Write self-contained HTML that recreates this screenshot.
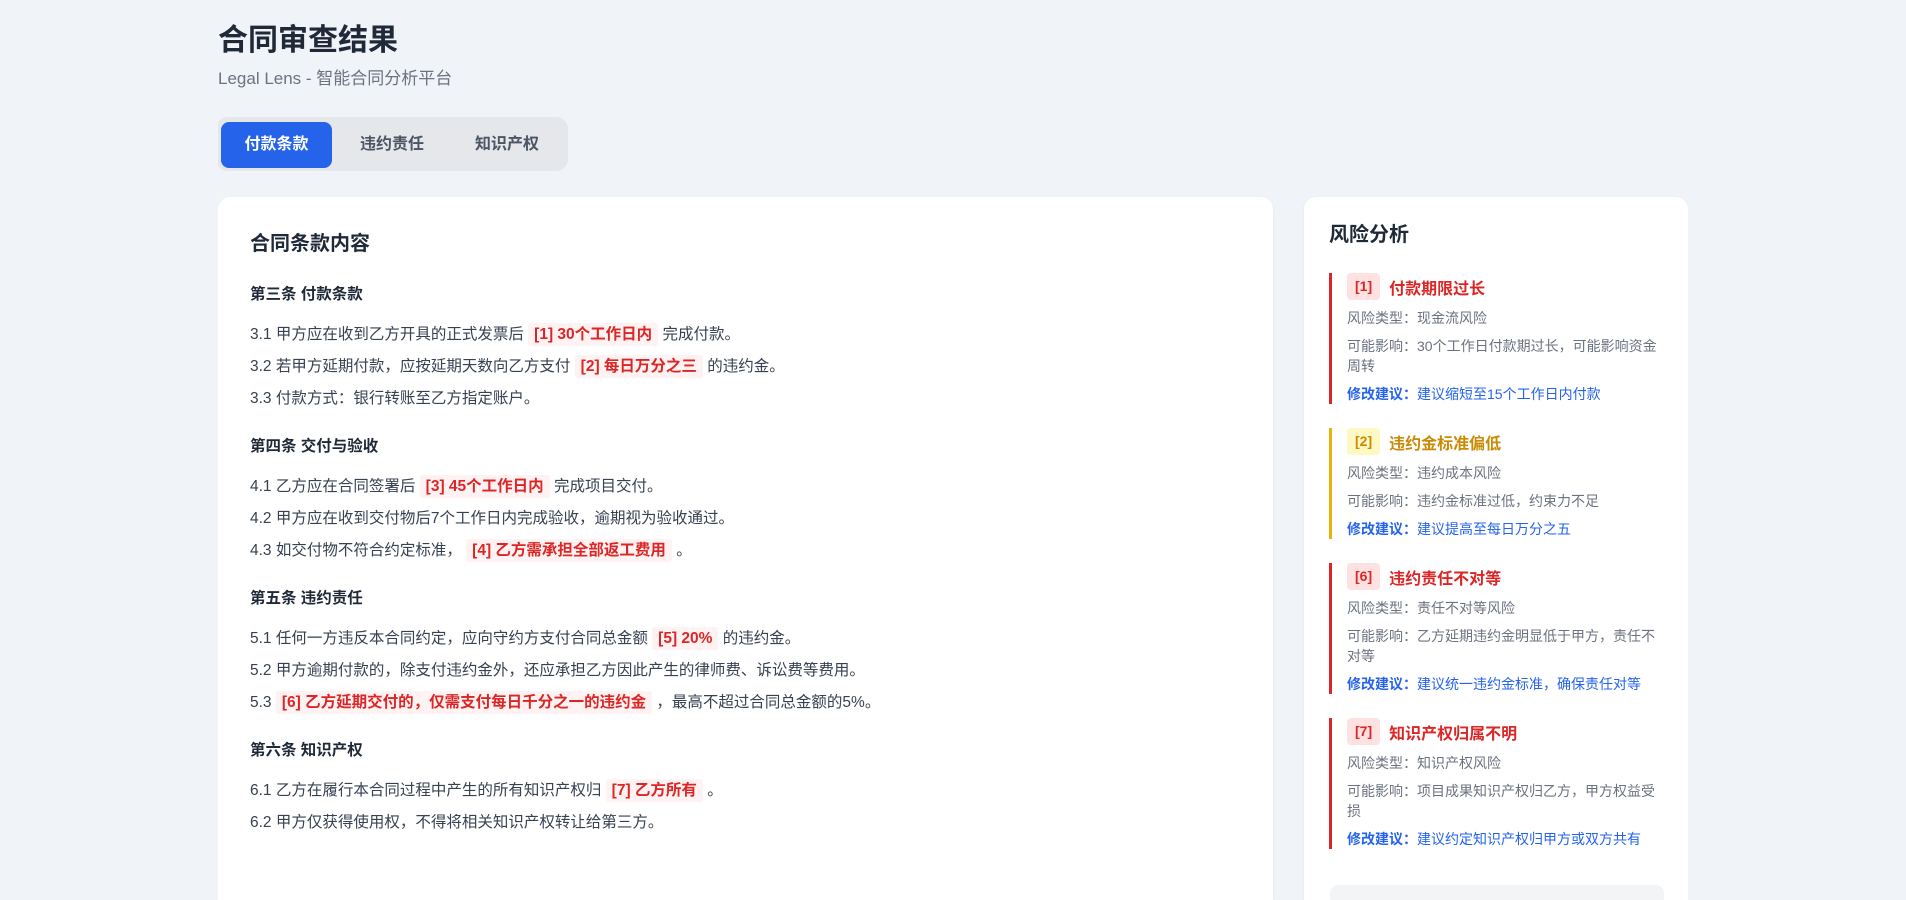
<!DOCTYPE html>
<html><head><meta charset="utf-8"><style>
*{box-sizing:border-box;margin:0;padding:0}
html,body{width:1906px;height:900px;overflow:hidden}
body{background:#f0f3f7;font-family:"Liberation Sans","Noto Sans CJK SC",sans-serif;color:#1f2937;position:relative}
.wrap{position:absolute;left:218px;top:0;width:1470px;height:900px;overflow:hidden}
h1{position:absolute;top:22px;left:0;font-size:30px;line-height:38px;font-weight:700;color:#1f2937}
.sub{position:absolute;top:68px;left:0;font-size:17px;line-height:22px;color:#6b7280}
.tabs{position:absolute;top:117px;left:-2px;width:352px;height:54px;background:#e5e7eb;border-radius:12px}
.tab{position:absolute;top:5px;height:46px;line-height:46px;font-size:16px;font-weight:700;color:#4b5563;text-align:center}
.tab.on{left:5px;width:111px;background:#2563eb;color:#fff;border-radius:8px}
.card{position:absolute;top:197px;background:#fff;border-radius:12px 12px 0 0;height:703px;overflow:hidden;box-shadow:0 1px 3px rgba(0,0,0,.05)}
.main{left:0;width:1055px;padding:33px 32px}
.side{left:1086px;width:384px;padding:24px 25px}
.card h2{font-size:20px;line-height:28px;font-weight:700;color:#1f2937}
.main h2{margin-bottom:25px}
.side h2{margin-bottom:24px}
h3{font-size:15.5px;line-height:24px;font-weight:700;margin-bottom:12px;color:#1f2937}
.ln{font-size:15.5px;line-height:32px;color:#374151}
.sec{margin-bottom:20px}
.hl{background:#fef2f2;color:#dc2626;font-weight:700;padding:3px 6px;border-radius:3px}
.item{border-left:3px solid #dc2626;padding-left:15px;margin-bottom:24px}
.item.y{border-color:#eab308}
.t{height:27px;display:flex;align-items:center}
.b{display:inline-block;height:27px;line-height:27px;padding:0 8px;background:#fee2e2;color:#dc2626;font-size:14px;font-weight:700;border-radius:4px;margin-right:9px}
.tt{font-size:16px;font-weight:700;color:#dc2626}
.y .b{background:#fef9c3;color:#ca8a04}
.y .tt{color:#ca8a04}
.item p{font-size:14px;line-height:20px;margin-top:8px;color:#6b7280}
.item p.s{color:#2563eb}
.item p.s b{font-weight:700}
.gbox{height:40px;background:#f3f4f6;border-radius:8px;margin-left:1px;width:334px;margin-top:36px}
.item:last-of-type{margin-bottom:0}
</style></head><body>
<div class="wrap">
<h1>合同审查结果</h1>
<div class="sub">Legal Lens - 智能合同分析平台</div>
<div class="tabs">
<div class="tab on">付款条款</div>
<div class="tab" style="left:121px;width:110px">违约责任</div>
<div class="tab" style="left:236px;width:110px">知识产权</div>
</div>
<div class="card main">
<h2>合同条款内容</h2>
<div class="sec"><h3>第三条 付款条款</h3>
<div class="ln">3.1 甲方应在收到乙方开具的正式发票后 <span class="hl">[1] 30个工作日内</span> 完成付款。</div>
<div class="ln">3.2 若甲方延期付款，应按延期天数向乙方支付 <span class="hl">[2] 每日万分之三</span> 的违约金。</div>
<div class="ln">3.3 付款方式：银行转账至乙方指定账户。</div></div>
<div class="sec"><h3>第四条 交付与验收</h3>
<div class="ln">4.1 乙方应在合同签署后 <span class="hl">[3] 45个工作日内</span> 完成项目交付。</div>
<div class="ln">4.2 甲方应在收到交付物后7个工作日内完成验收，逾期视为验收通过。</div>
<div class="ln">4.3 如交付物不符合约定标准， <span class="hl">[4] 乙方需承担全部返工费用</span> 。</div></div>
<div class="sec"><h3>第五条 违约责任</h3>
<div class="ln">5.1 任何一方违反本合同约定，应向守约方支付合同总金额 <span class="hl">[5] 20%</span> 的违约金。</div>
<div class="ln">5.2 甲方逾期付款的，除支付违约金外，还应承担乙方因此产生的律师费、诉讼费等费用。</div>
<div class="ln">5.3 <span class="hl">[6] 乙方延期交付的，仅需支付每日千分之一的违约金</span> ，最高不超过合同总金额的5%。</div></div>
<div class="sec"><h3>第六条 知识产权</h3>
<div class="ln">6.1 乙方在履行本合同过程中产生的所有知识产权归 <span class="hl">[7] 乙方所有</span> 。</div>
<div class="ln">6.2 甲方仅获得使用权，不得将相关知识产权转让给第三方。</div></div>
</div>
<div class="card side">
<h2>风险分析</h2>
<div class="item"><div class="t"><span class="b">[1]</span><span class="tt">付款期限过长</span></div>
<p>风险类型：现金流风险</p><p>可能影响：30个工作日付款期过长，可能影响资金周转</p><p class="s"><b>修改建议：</b>建议缩短至15个工作日内付款</p></div>
<div class="item y"><div class="t"><span class="b">[2]</span><span class="tt">违约金标准偏低</span></div>
<p>风险类型：违约成本风险</p><p>可能影响：违约金标准过低，约束力不足</p><p class="s"><b>修改建议：</b>建议提高至每日万分之五</p></div>
<div class="item"><div class="t"><span class="b">[6]</span><span class="tt">违约责任不对等</span></div>
<p>风险类型：责任不对等风险</p><p>可能影响：乙方延期违约金明显低于甲方，责任不对等</p><p class="s"><b>修改建议：</b>建议统一违约金标准，确保责任对等</p></div>
<div class="item"><div class="t"><span class="b">[7]</span><span class="tt">知识产权归属不明</span></div>
<p>风险类型：知识产权风险</p><p>可能影响：项目成果知识产权归乙方，甲方权益受损</p><p class="s"><b>修改建议：</b>建议约定知识产权归甲方或双方共有</p></div>
<div class="gbox"></div>
</div>
</div>
</body></html>
